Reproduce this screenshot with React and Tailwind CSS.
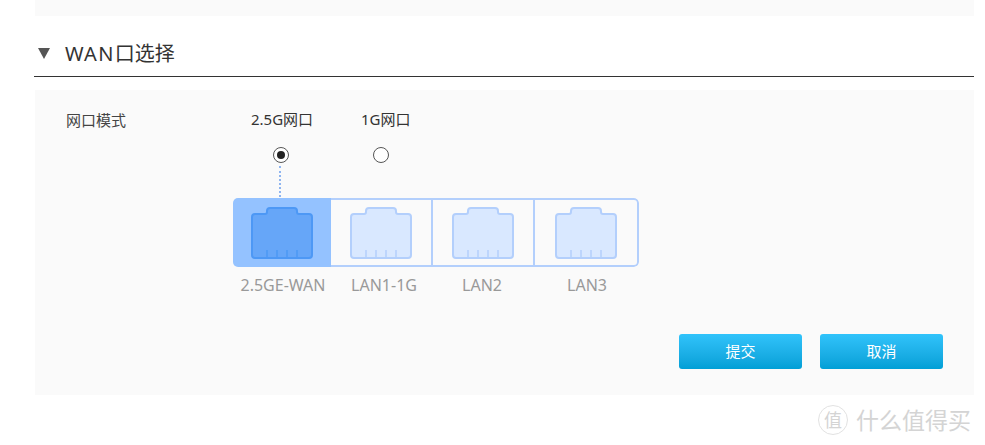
const font = "font-['Noto_Sans','Noto_Sans_CJK_SC',sans-serif]";

function PortIcon({ active }) {
  const stroke = active ? "#4d98f5" : "#b3cffc";
  const fill = active ? "#66a6f8" : "#d9e8ff";
  return (
    <svg width="62" height="52" viewBox="0 0 62 52" fill="none">
      <path
        d="M4 7h10c1.200 0 2-.8 2-2V4c0-1.700 1.300-3 3-3h24c1.700 0 3 1.300 3 3v1c0 1.200.8 2 2 2h10c1.700 0 3 1.300 3 3v38c0 1.700-1.300 3-3 3H4c-1.700 0-3-1.300-3-3V10c0-1.700 1.300-3 3-3z"
        fill={fill}
        stroke={stroke}
        strokeWidth="2"
      />
      <path d="M16 43v7M26 43v7M36 43v7M46 43v7" stroke={stroke} strokeWidth="1.500" />
    </svg>
  );
}

const ports = [
  { name: "2.5GE-WAN", active: true, w: "w-[98px] bg-[#94c2ff]", label: "w-[100px]" },
  { name: "LAN1-1G", w: "w-[102px] border-y-2 border-r-2 border-[#b3cffc]", label: "w-[102px]" },
  { name: "LAN2", w: "w-[102px] border-y-2 border-r-2 border-[#b3cffc]", label: "w-[94px]" },
  { name: "LAN3", w: "flex-1 border-y-2 border-r-2 rounded-r-[5px] border-[#b3cffc]", label: "w-[116px]" },
];

export default function App() {
  return (
    <div className={`${font} relative w-[985px] h-[445px] bg-white overflow-hidden`}>
      <div className="ml-[35px] w-[939px] h-[16px] bg-[#fafafa]" />

      <div className="ml-[34px] w-[940px] h-[61px] border-b border-[#333] flex items-center pt-[15px]">
        <span className="ml-[4px] w-0 h-0 border-x-[6px] border-x-transparent border-t-[11px] border-t-[#555]" />
        <span className="ml-[15px] text-[20px] leading-[26px] text-[#333]">
          <span className="tracking-[1.300px]">WAN</span>口选择
        </span>
      </div>

      <div className="ml-[35px] mt-[13px] w-[939px] h-[305px] bg-[#fafafa] flex">
        <div className="w-[198px] pl-[31px] pt-[20px] text-[15px] leading-[20px] text-[#444]">网口模式</div>

        <div className="flex-1 flex flex-col">
          <div className="flex pt-[19px] text-[15px] leading-[20px] text-[#333]">
            <span className="ml-[18px] w-[61px] text-center whitespace-nowrap">2.5G网口</span>
            <span className="ml-[49px] w-[49px] text-center whitespace-nowrap">1G网口</span>
          </div>

          <div className="flex items-center mt-[18px] h-[16px]">
            <span className="ml-[40px] w-[16px] h-[16px] rounded-full border border-[#555] bg-white flex items-center justify-center">
              <span className="w-[8px] h-[8px] rounded-full bg-[#222]" />
            </span>
            <span className="ml-[84px] w-[16px] h-[16px] rounded-full border border-[#555] bg-white" />
          </div>

          <div className="ml-[46px] mt-[3px] h-[31px] mb-[1px] w-0 border-l-2 border-dotted border-[#8fb5f0]" />

          <div className="w-[406px] h-[69px] flex rounded-[5px] overflow-hidden">
            {ports.map((p) => (
              <div key={p.name} className={`${p.w} flex items-center justify-center`}>
                <PortIcon active={p.active} />
              </div>
            ))}
          </div>

          <div className="flex mt-[8px] text-[16px] leading-[20px] text-[#999]">
            {ports.map((p) => (
              <span key={p.name} className={`${p.label} text-center whitespace-nowrap`}>{p.name}</span>
            ))}
          </div>

          <div className="flex justify-end mt-[39px] gap-[18px] mr-[31px]">
            <button className="w-[123px] h-[35px] rounded-[3px] bg-gradient-to-b from-[#30c3fb] to-[#009fd6] text-white text-[15px]">提交</button>
            <button className="w-[123px] h-[35px] rounded-[3px] bg-gradient-to-b from-[#30c3fb] to-[#009fd6] text-white text-[15px]">取消</button>
          </div>
        </div>
      </div>

      <div className="absolute left-[818px] top-[405px] flex items-center gap-[8px] text-[#d4d4d4]">
        <span className="w-[30px] h-[30px] rounded-full border border-[#e2e2e2] flex items-center justify-center text-[18px]">值</span>
        <span className="text-[23px] leading-[28px] whitespace-nowrap">什么值得买</span>
      </div>
    </div>
  );
}
